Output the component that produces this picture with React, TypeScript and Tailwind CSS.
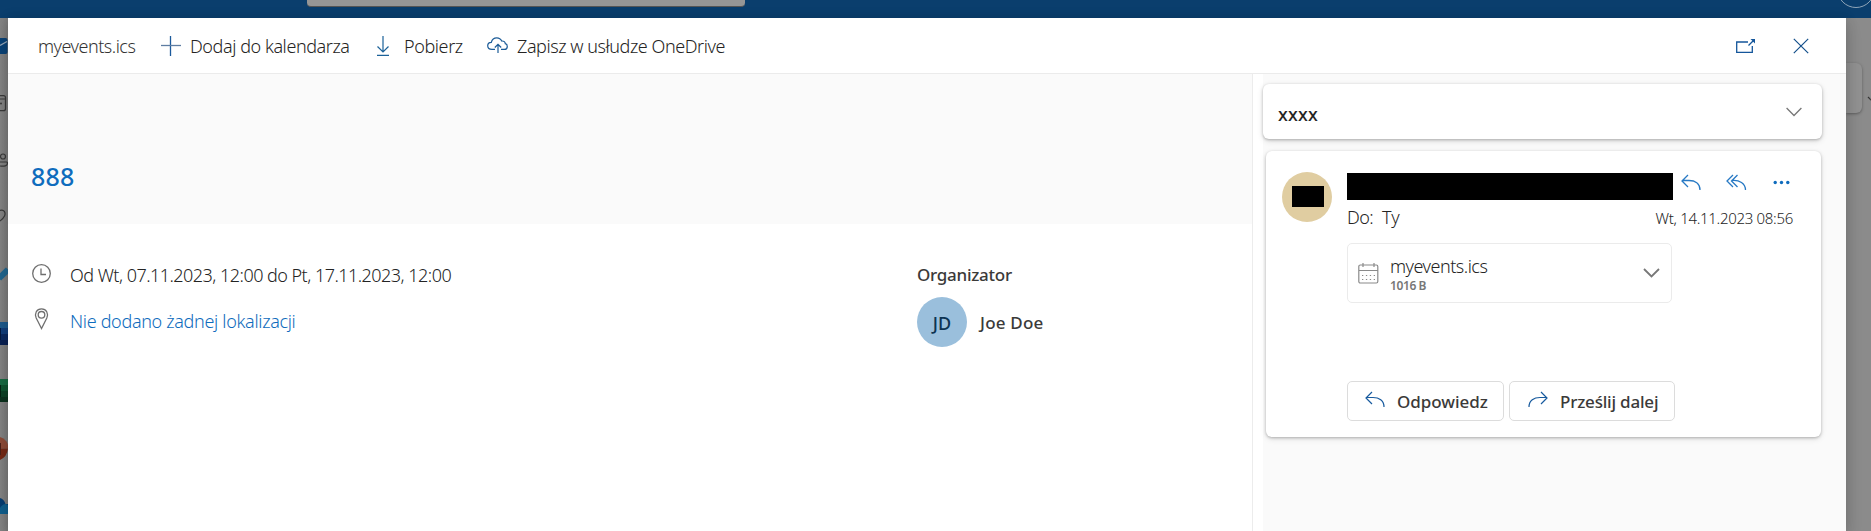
import type { ReactNode } from "react";

function Svg({ w, h, className = "", sw = 1.2, children }: { w: number; h: number; className?: string; sw?: number; children: ReactNode }) {
  return (
    <svg width={w} height={h} viewBox={`0 0 ${w} ${h}`} fill="none" stroke="currentColor" strokeWidth={sw} className={`shrink-0 ${className}`}>
      {children}
    </svg>
  );
}

const ReplyPath = () => <path d="M7 1 1 7l6 6M1 6.5h7c6 0 11 3 11 9.5" />;

function Rail() {
  return (
    <div className="flex w-2 shrink-0 flex-col overflow-hidden bg-linear-to-r from-[#858585] to-[#7b7b7b] text-[#3a3a3a]">
      <Svg w={8} h={57}>
        <path d="M0 20h5.500q2 0 2 2v12q0 2-2 2H0z" fill="#0b4377" stroke="none" />
        <path d="M0 27.500 7 23.500" stroke="#9aa9b8" />
      </Svg>
      <Svg w={8} h={57}>
        <path d="M-4 20.700H3.500q2 0 2 2v11q0 2-2 2H-4M-4 24h9.500" />
        <circle cx="1" cy="28.500" r="1" fill="currentColor" stroke="none" />
      </Svg>
      <Svg w={8} h={57}>
        <circle cx="3" cy="24.500" r="2.500" />
        <path d="M0 30h6.500q1 0 1 1c0 3-3.500 3.500-7.500 3" />
      </Svg>
      <Svg w={8} h={57}>
        <path d="M0 21.500c4-1.500 6 2 4.500 5.500Q3 30 0 32" />
      </Svg>
      <Svg w={8} h={57}>
        <path d="M-1 32.500 8 23.500" stroke="#21668f" strokeWidth="6" />
      </Svg>
      <Svg w={8} h={57}>
        <g stroke="none">
          <path d="M0 19h8v6H0z" fill="#1d5a8c" />
          <path d="M0 25h8v6H0z" fill="#123f7c" />
          <path d="M0 31h8v6H0z" fill="#0c2a60" />
          <path d="M0 37h8v5H0z" fill="#0a2153" />
          <path d="M0 25h1v12H0z" fill="#071b40" />
        </g>
      </Svg>
      <Svg w={8} h={57}>
        <g stroke="none">
          <path d="M0 19h8v6H0z" fill="#176a42" />
          <path d="M0 25h8v6H0z" fill="#0f5430" />
          <path d="M0 31h8v6H0z" fill="#0d4226" />
          <path d="M0 37h8v5H0z" fill="#0c321e" />
          <path d="M0 25h1v12H0z" fill="#062313" />
        </g>
      </Svg>
      <Svg w={8} h={57}>
        <g stroke="none">
          <path d="M0 20a11.500 11.500 0 0 1 8.500 11.500H0z" fill="#8e4b37" />
          <path d="M8 31.500Q7 40 0 43V31.500z" fill="#752814" />
          <path d="M0 26h1v12H0z" fill="#4b2118" />
        </g>
      </Svg>
      <Svg w={8} h={57}>
        <g stroke="none">
          <path d="M0 24q4 1 5.500 6H8v5H0z" fill="#083e73" />
          <path d="M0 34q4-6 8-3v9H0z" fill="#11608e" />
        </g>
      </Svg>
    </div>
  );
}

function Toolbar() {
  return (
    <div className="flex h-14 shrink-0 items-center border-b border-[#ebebeb] pl-[30px] text-[18px] font-light leading-6 text-[#252423]">
      <span className="w-[123px] pt-px tracking-[-0.5px] text-[#333]">myevents.ics</span>
      <Svg w={20} h={20} className="text-[#1b5a9c]" sw={1.3}>
        <path d="M9.500 0v20" />
        <path d="M0 9.500h20" stroke="#5e7da3" />
      </Svg>
      <span className="ml-[9px] w-[187px] pt-px tracking-[-0.43px]">Dodaj do kalendarza</span>
      <Svg w={12} h={20} className="text-[#1c6299]">
        <path d="M6 0v16M.5 10.500 6 16l5.500-5.500M0 19.400h12" />
      </Svg>
      <span className="ml-[15px] w-[83px] pt-px tracking-[-0.4px]">Pobierz</span>
      <Svg w={21} h={17} className="text-[#1c5c98]">
        <path d="M8 12.400H5C2.500 12.400.7 11 .7 8.800.7 6.600 2.300 5.300 4.300 5.300 5 2.500 7 .8 9.800.8c2.400 0 4 1.200 4.900 3.200 2.200-.2 3.500 1 3.600 2.700 1.300.3 2 1.400 2 2.700 0 1.800-1.200 3-3 3H14" />
        <path d="M11 16V7.500M7.800 10.500 11 7.300l3.200 3.200" />
      </Svg>
      <span className="ml-[9px] pt-px tracking-[-0.45px]">Zapisz w usłudze OneDrive</span>
      <Svg w={20} h={16} className="ml-auto text-[#14569b]" sw={1.3}>
        <path d="M12 4H.7v10.300h15.600V8M12.500 7.500l5-5" />
        <path d="M14.500 1H19v4.500z" fill="currentColor" stroke="none" />
      </Svg>
      <Svg w={16} h={16} className="ml-[37px] mr-[37px] text-[#14508b]">
        <path d="m.8.8 14.400 14.400M15.200.8.8 15.200" />
      </Svg>
    </div>
  );
}

function EventDetails() {
  return (
    <main className="flex w-[1245px] shrink-0 flex-col border-r border-[#ececec]">
      <div className="h-[150px] shrink-0 bg-[#fafafa] pl-[23px] pt-[86px]">
        <h1 className="text-[25px] font-medium leading-8 tracking-[0.2px] text-[#0f6cbd]">888</h1>
      </div>
      <div className="flex pl-6 pt-[38px]">
        <div className="w-[885px] text-[18px] font-light leading-6">
          <div className="flex items-start">
            <Svg w={20} h={20} className="mt-0.5 text-[#6f6f6f]" sw={1.3}>
              <circle cx="9.500" cy="9.500" r="8.800" />
              <path d="M9 4.500v6h5" />
            </Svg>
            <span className="ml-[18px] pt-px tracking-[-0.53px] text-[#242424]">Od Wt, 07.11.2023, 12:00 do Pt, 17.11.2023, 12:00</span>
          </div>
          <div className="mt-[21px] flex items-start">
            <Svg w={20} h={22} className="text-[#6f6f6f]" sw={1.3}>
              <path d="M9.500 20.500 4.200 10C2.300 5.500 4.500.8 9.500.8s7.200 4.700 5.300 9.200z" />
              <circle cx="9.500" cy="6.800" r="3.300" />
            </Svg>
            <span className="ml-[18px] pt-px tracking-[-0.32px] text-[#0f6cbd]">Nie dodano żadnej lokalizacji</span>
          </div>
        </div>
        <div className="text-[17px] font-medium leading-6 text-[#3b3a39]">
          <div className="pt-px tracking-[-0.27px]">Organizator</div>
          <div className="mt-2.5 flex items-center">
            <div className="flex size-[50px] items-center justify-center rounded-full bg-[#9abfdc] pt-px text-[18px] text-[#0c3352]">JD</div>
            <span className="ml-[13px] pt-px tracking-[0.2px]">Joe Doe</span>
          </div>
        </div>
      </div>
    </main>
  );
}

function Message() {
  return (
    <article className="ml-[3px] mt-3 flex h-[286px] w-[555px] rounded-md bg-white pl-4 pt-[21px] shadow-[0_1px_3px_rgba(0,0,0,0.25),0_2px_6px_rgba(0,0,0,0.1)]">
      <div className="flex size-[50px] shrink-0 items-center justify-center rounded-full bg-[#e0cda1] pl-px">
        <div className="-mt-px h-[21px] w-8 bg-black" />
      </div>
      <div className="ml-[15px] w-[447px] pt-px">
        <div className="flex items-start">
          <div className="h-[27px] w-[326px] bg-black" />
          <div className="ml-2 mt-px flex items-start text-[#2779c4]">
            <Svg w={21} h={17} sw={1.3}><ReplyPath /></Svg>
            <Svg w={22} h={17} className="ml-6" sw={1.3}>
              <path d="M7 1 1 7l6 6M11.500 1l-6 6 6 6M5.500 6.500c8-1 14 3 14 9.500" />
            </Svg>
            <svg width="17" height="17" viewBox="0 0 17 17" className="ml-[25px] fill-[#0f6cbd]">
              <circle cx="2.200" cy="8.500" r="1.700" /><circle cx="8.500" cy="8.500" r="1.700" /><circle cx="14.800" cy="8.500" r="1.700" />
            </svg>
          </div>
        </div>
        <div className="mt-[5px] flex h-6 items-center justify-between text-[#242424]">
          <span className="flex text-[18px] font-light leading-6">
            <span className="w-[35px] tracking-[-0.6px]">Do:</span>
            <span>Ty</span>
          </span>
          <span className="mr-px pt-px text-[15px] font-light leading-6 tracking-[-0.3px]">Wt, 14.11.2023 08:56</span>
        </div>
        <div className="mt-3.5 flex h-[60px] w-[325px] items-center rounded-[5px] border border-[#ebebeb] pl-2.5 pr-[11px]">
          <Svg w={21} h={21} className="text-[#8a8a8a]">
            <rect x=".8" y="2" width="19" height="18" rx="1.500" />
            <path d="M1 7.500h19M5 0v4M16 0v4" />
            <path d="M4 12.500h14M4 16.500h14" strokeDasharray="1.300 2.600" />
          </Svg>
          <div className="ml-[11px] flex flex-col pt-[3px]">
            <span className="text-[18px] font-light leading-[22px] tracking-[-0.5px] text-[#242424]">myevents.ics</span>
            <span className="mt-px text-[12px] font-semibold leading-4 tracking-[-0.4px] text-[#777]">1016 B</span>
          </div>
          <Svg w={17} h={10} className="ml-auto text-[#777]" sw={1.8}>
            <path d="m1 1 7.500 7.500L16 1" />
          </Svg>
        </div>
        <div className="mt-[78px] flex gap-[5px] text-[17px] font-medium leading-6 text-[#3b3a39]">
          <button className="flex h-10 w-[157px] items-center rounded-[5px] border border-[#dcdcdc] pl-[17px]">
            <Svg w={20} h={17} className="-mt-1 text-[#175a9e]"><ReplyPath /></Svg>
            <span className="ml-3 pt-px tracking-[-0.05px]">Odpowiedz</span>
          </button>
          <button className="flex h-10 w-[166px] items-center rounded-[5px] border border-[#dcdcdc] pl-[18px]">
            <Svg w={20} h={17} className="-mt-1 -scale-x-100 text-[#175a9e]"><ReplyPath /></Svg>
            <span className="ml-3 whitespace-nowrap pt-px tracking-[-0.2px]">Prześlij dalej</span>
          </button>
        </div>
      </div>
    </article>
  );
}

export default function App() {
  return (
    <div className="flex h-[531px] flex-col overflow-hidden bg-[#8b8b8b] font-['Noto_Sans','Open_Sans',sans-serif]">
      <header className="flex h-[18px] shrink-0 justify-between overflow-hidden bg-[#0a3e6d]">
        <div className="ml-[307px] h-[7px] w-[438px] rounded-b border-b border-[#555] bg-[#969696]" />
        <div className="-mt-[30px] mr-[-4px] size-[38px] rounded-full border border-[#8fa5b8]" />
      </header>
      <div className="flex min-h-0 grow">
        <Rail />
        <div className="z-10 flex w-[1838px] shrink-0 flex-col bg-white shadow-[0_8px_16px_rgba(0,0,0,0.14),0_0_12px_rgba(0,0,0,0.12)]">
          <Toolbar />
          <div className="flex min-h-0 grow">
            <EventDetails />
            <aside className="ml-2.5 grow bg-[#fafafa] pt-2.5">
              <div className="flex h-[55px] w-[559px] items-center justify-between rounded-md bg-white pl-[15px] pr-5 shadow-[0_1px_3px_rgba(0,0,0,0.25),0_2px_6px_rgba(0,0,0,0.12)]">
                <span className="pt-1 text-[18px] font-medium leading-6 tracking-[0.2px] text-[#242424]">xxxx</span>
                <Svg w={16} h={10} className="text-[#777]" sw={1.3}>
                  <path d="m.6 1 7.400 7.500L15.400 1" />
                </Svg>
              </div>
              <Message />
            </aside>
          </div>
        </div>
        <div className="flex grow flex-col overflow-hidden bg-[#8b8b8b] pt-[45px]">
          <div className="flex">
            <div className="h-[50px] w-4 shrink-0 rounded-r-md bg-[#919191] shadow-[0_1px_3px_rgba(0,0,0,0.35)]" />
            <Svg w={9} h={10} className="ml-[5px] mt-[33px] text-[#333]"><path d="m1 1 7 7" /></Svg>
          </div>
        </div>
      </div>
    </div>
  );
}
